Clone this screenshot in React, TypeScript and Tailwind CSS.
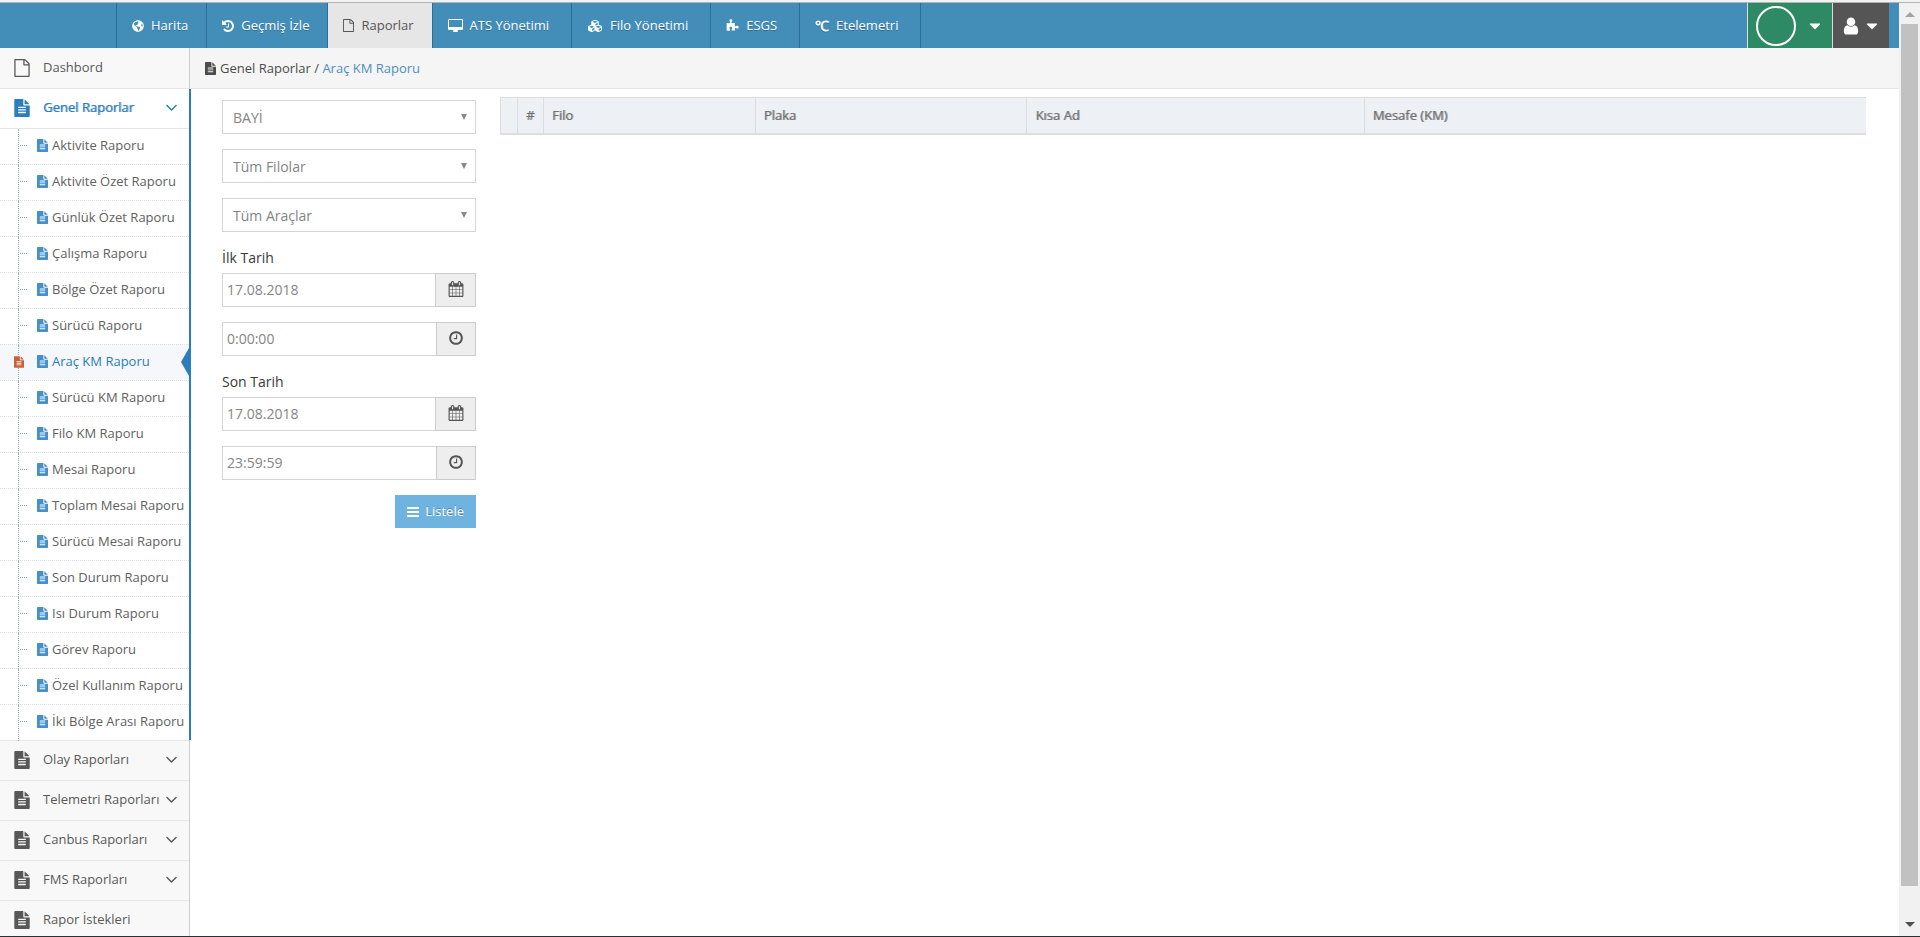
import { useState } from "react";
import type { ReactNode } from "react";
import { FaCubes, FaGlobeAmericas } from "react-icons/fa";

const PATHS = {
  file: "M1596 380q28 28 48 76t20 88v1152q0 40-28 68t-68 28h-1344q-40 0-68-28t-28-68v-1600q0-40 28-68t68-28h896q40 0 88 20t76 48zm-444-244v376h376q-10-29-22-41l-313-313q-12-12-41-22zm384 1528v-1024h-416q-40 0-68-28t-28-68v-416h-768v1536h1280z",
  fileText:
    "M1596 476q14 14 28 36h-472v-472q22 14 36 28zm-476 164h544v1056q0 40-28 68t-68 28h-1344q-40 0-68-28t-28-68v-1600q0-40 28-68t68-28h800v544q0 40 28 68t68 28zm160 736v-64q0-14-9-23t-23-9h-704q-14 0-23 9t-9 23v64q0 14 9 23t23 9h704q14 0 23-9t9-23zm0-256v-64q0-14-9-23t-23-9h-704q-14 0-23 9t-9 23v64q0 14 9 23t23 9h704q14 0 23-9t9-23zm0-256v-64q0-14-9-23t-23-9h-704q-14 0-23 9t-9 23v64q0 14 9 23t23 9h704q14 0 23-9t9-23z",
  calendar:
    "M192 1664h288v-288h-288v288zm352 0h320v-288h-320v288zm-352-352h288v-320h-288v320zm352 0h320v-320h-320v320zm-352-384h288v-288h-288v288zm736 736h320v-288h-320v288zm-384-736h320v-288h-320v288zm768 736h288v-288h-288v288zm-384-352h320v-320h-320v320zm-352-864v-288q0-13-9.5-22.5t-22.5-9.5h-64q-13 0-22.5 9.5t-9.5 22.5v288q0 13 9.5 22.5t22.5 9.5h64q13 0 22.5-9.5t9.5-22.5zm736 864h288v-320h-288v320zm-384-384h320v-288h-320v288zm384 0h288v-288h-288v288zm32-480v-288q0-13-9.5-22.5t-22.5-9.5h-64q-13 0-22.5 9.5t-9.5 22.5v288q0 13 9.5 22.5t22.5 9.5h64q13 0 22.5-9.5t9.5-22.5zm384-64v1280q0 52-38 90t-90 38h-1408q-52 0-90-38t-38-90v-1280q0-52 38-90t90-38h128v-96q0-66 47-113t113-47h64q66 0 113 47t47 113v96h384v-96q0-66 47-113t113-47h64q66 0 113 47t47 113v96h128q52 0 90 38t38 90z",
  clock:
    "M1024 544v448q0 14-9 23t-23 9h-320q-14 0-23-9t-9-23v-64q0-14 9-23t23-9h224v-352q0-14 9-23t23-9h64q14 0 23 9t9 23zm416 352q0-148-73-273t-198-198-273-73-273 73-198 198-73 273 73 273 198 198 273 73 273-73 198-198 73-273zm224 0q0 209-103 385.5t-279.5 279.5-385.5 103-385.5-103-279.5-279.5-103-385.5 103-385.5 279.5-279.5 385.5-103 385.5 103 279.5 279.5 103 385.5z",
  history:
    "M1664 896q0 156-61 298t-164 245-245 164-298 61q-172 0-327-72.5t-264-204.5q-7-10-6.5-22.5t8.5-20.5l137-138q10-9 25-9 16 2 23 12 73 95 179 147t225 52q104 0 198.5-40.5t163.5-109.5 109.5-163.5 40.5-198.5-40.5-198.5-109.5-163.5-163.5-109.5-198.5-40.5q-98 0-188 35.5t-160 101.5l137 138q31 30 14 69-17 40-59 40h-448q-26 0-45-19t-19-45v-448q0-42 40-59 39-17 69 14l130 129q107-101 244.5-156.5t284.5-55.5q156 0 298 61t245 164 164 245 61 298zm-640-288v448q0 14-9 23t-23 9h-320q-14 0-23-9t-9-23v-64q0-14 9-23t23-9h224v-352q0-14 9-23t23-9h64q14 0 23 9t9 23z",
  desktop:
    "M1728 992v-832q0-13-9.5-22.5t-22.5-9.5h-1600q-13 0-22.5 9.5t-9.5 22.5v832q0 13 9.5 22.5t22.5 9.5h1600q13 0 22.5-9.5t9.5-22.5zm128-832v1088q0 66-47 113t-113 47h-544q0 37 16 77.5t32 71 16 43.5q0 26-19 45t-45 19h-512q-26 0-45-19t-19-45q0-14 16-44t32-70 16-78h-544q-66 0-113-47t-47-113v-1088q0-66 47-113t113-47h1600q66 0 113 47t47 113z",
  puzzle:
    "M1755 1131q0 81-44.5 135t-123.5 54q-41 0-77.5-17.5t-59-38-56.5-38-71-17.5q-110 0-110 124 0 39 16 115t15 115v5q-22 0-33 1-34 3-97.5 11.5t-115.5 13.5-98 5q-61 0-103-26.5t-42-83.5q0-37 17.5-71t38-56.5 38-59 17.5-77.5q0-79-54-123.5t-135-44.5q-84 0-143 45.5t-59 127.5q0 43 15 83t33.5 64.5 33.5 53 15 50.5q0 45-46 89-37 35-117 35-95 0-245-24-9-2-27.5-4t-27.5-4l-13-2q-1 0-3-1-2 0-2-1v-1024q2 1 17.5 3.5t34 5 21.5 3.5q150 24 245 24 80 0 117-35 46-44 46-89 0-22-15-50.5t-33.5-53-33.5-64.5-15-83q0-82 59-127.5t144-45.5q80 0 134 44.5t54 123.5q0 41-17.5 77.5t-38 59-38 56.5-17.5 71q0 57 42 83.5t103 26.5q64 0 180-15t163-17v2q-1 2-3.5 17.5t-5 34-3.5 21.5q-24 150-24 245 0 80 35 117 44 46 89 46 22 0 50.5-15t53-33.5 64.5-33.5 83-15q82 0 127.5 59t45.5 143z",
  user: "M1536 1399q0 109-62.5 187t-150.5 78h-854q-88 0-150.5-78t-62.5-187q0-85 8.5-160.5t31.5-152 58.5-131 94-89 134.5-34.5q131 128 313 128t313-128q76 0 134.5 34.5t94 89 58.5 131 31.5 152 8.5 160.5zm-256-887q0 159-112.5 271.5t-271.5 112.5-271.5-112.5-112.5-271.5 112.5-271.5 271.5-112.5 271.5 112.5 112.5 271.5z",
  caret:
    "M1408 704q0 26-19 45l-448 448q-19 19-45 19t-45-19l-448-448q-19-19-19-45t19-45 45-19h896q26 0 45 19t19 45z",
  angle:
    "M1395 736q0 13-10 23l-466 466q-10 10-23 10t-23-10l-466-466q-10-10-10-23t10-23l50-50q10-10 23-10t23 10l393 393 393-393q10-10 23-10t23 10l50 50q10 10 10 23z",
  bars: "M128 256h1536v256h-1536zM128 768h1536v256h-1536zM128 1280h1536v256h-1536z",
};

const FILE_BOX = "128 0 1536 1792";

function Icon({
  name,
  className,
  box = "0 0 1792 1792",
}: {
  name: keyof typeof PATHS;
  className: string;
  box?: string;
}) {
  return (
    <svg viewBox={box} fill="currentColor" aria-hidden="true" className={`shrink-0 ${className}`}>
      <path d={PATHS[name]} />
    </svg>
  );
}

const navItems: { label: string; icon: ReactNode; wide?: boolean; active?: boolean }[] = [
  { label: "Harita", icon: <FaGlobeAmericas className="size-3" /> },
  { label: "Geçmiş İzle", icon: <Icon name="history" box="128 128 1536 1536" className="size-3" /> },
  { label: "Raporlar", icon: <Icon name="file" box={FILE_BOX} className="h-[13px] w-[11px]" />, active: true },
  {
    label: "ATS Yönetimi",
    icon: <Icon name="desktop" box="-64 0 1920 1664" className="h-[13px] w-[15px]" />,
    wide: true,
  },
  { label: "Filo Yönetimi", icon: <FaCubes className="h-[14px] w-4" />, wide: true },
  { label: "ESGS", icon: <Icon name="puzzle" className="size-[13px]" />, wide: true },
  { label: "Etelemetri", icon: <span className="text-sm font-bold leading-none">℃</span>, wide: true },
];

const reports = [
  "Aktivite Raporu",
  "Aktivite Özet Raporu",
  "Günlük Özet Raporu",
  "Çalışma Raporu",
  "Bölge Özet Raporu",
  "Sürücü Raporu",
  "Araç KM Raporu",
  "Sürücü KM Raporu",
  "Filo KM Raporu",
  "Mesai Raporu",
  "Toplam Mesai Raporu",
  "Sürücü Mesai Raporu",
  "Son Durum Raporu",
  "Isı Durum Raporu",
  "Görev Raporu",
  "Özel Kullanım Raporu",
  "İki Bölge Arası Raporu",
];

const groups = [
  { label: "Olay Raporları", nested: true },
  { label: "Telemetri Raporları", nested: true },
  { label: "Canbus Raporları", nested: true },
  { label: "FMS Raporları", nested: true },
  { label: "Rapor İstekleri", nested: false },
];

function Navbar() {
  return (
    <header className="flex h-[45px] shrink-0 bg-[#438eb9] pr-[10px]">
      <nav className="ml-[116px] flex border-r border-[#2c6f96]">
        {navItems.map((item) => (
          <a
            key={item.label}
            href="#"
            className={`flex items-center gap-[7px] border-l border-[#2c6f96] pl-[15px] ${
              item.wide ? "pr-[22px]" : "pr-[18px]"
            } ${
              item.active ? "bg-[#e6e6e6] text-[#555]" : "text-white [text-shadow:0_1px_0_rgba(0,0,0,0.25)]"
            }`}
          >
            {item.icon}
            {item.label}
          </a>
        ))}
      </nav>
      <div className="ml-auto flex text-white">
        <button
          type="button"
          aria-label="Firma"
          className="flex w-[86px] items-center gap-[10px] border-x border-[#ddd] bg-[#2e8965] pl-2"
        >
          <span className="size-10 rounded-full border-2 border-white" />
          <Icon name="caret" className="size-[18px]" />
        </button>
        <button type="button" aria-label="Kullanıcı" className="flex w-14 items-center gap-[2px] bg-[#555] pl-2">
          <Icon name="user" className="size-5" />
          <Icon name="caret" className="size-[18px]" />
        </button>
      </div>
    </header>
  );
}

function ReportLink({ label, active, last }: { label: string; active: boolean; last: boolean }) {
  return (
    <li className={`relative ${last ? "" : "border-b border-dotted border-[#ddd]"}`}>
      <a
        href="#"
        className={`flex h-[35px] items-center gap-1 whitespace-nowrap pb-[2px] pl-[37px] ${
          active ? "bg-[#f5f7fa] text-[#2b7dbc]" : "text-[#616161]"
        }`}
      >
        <Icon name="fileText" box={FILE_BOX} className="h-[13px] w-[11px] text-[#478fca]" />
        {label}
      </a>
      {active ? (
        <svg viewBox="0 0 8 28" className="absolute right-0 top-[3px] h-7 w-2" fill="#2b7dbc" aria-hidden="true">
          <path d="M8 0v28L0 14z" />
        </svg>
      ) : (
        <span className="absolute left-5 top-4 w-[7px] border-t border-dotted border-[#8fb0c9]" />
      )}
      <span className="absolute -bottom-px left-[18px] top-0 border-l border-dotted border-[#8fb0c9]" />
      {active && (
        <Icon
          name="fileText"
          box={FILE_BOX}
          className="absolute left-[14px] top-[11px] h-3 w-[10px] bg-[#f5f7fa] text-[#c86139]"
        />
      )}
    </li>
  );
}

function Sidebar() {
  return (
    <aside className="w-[190px] shrink-0 border-r border-[#ccc] bg-[#f2f2f2]">
      <ul>
        <li className="border-b border-[#e5e5e5]">
          <a href="#" className="flex h-10 items-center bg-[#f8f8f8] pl-[14px] text-[#585858]">
            <Icon name="file" box={FILE_BOX} className="mr-[13px] h-[18px] w-4" />
            Dashbord
          </a>
        </li>
        <li className="relative bg-white">
          <a
            href="#"
            className="flex h-10 items-center border-b border-[#e5e5e5] pb-px pl-[14px] pr-3 text-[#2b7dbc] [text-shadow:1px_0_0_rgba(43,125,188,0.6)]"
          >
            <Icon name="fileText" box={FILE_BOX} className="mr-[13px] h-[18px] w-4" />
            Genel Raporlar
            <Icon name="angle" box="384 512 1024 896" className="ml-auto h-[10px] w-[11px]" />
          </a>
          <ul>
            {reports.map((label, i) => (
              <ReportLink
                key={label}
                label={label}
                active={label === "Araç KM Raporu"}
                last={i === reports.length - 1}
              />
            ))}
          </ul>
          <span className="absolute -right-[2px] inset-y-0 w-[2px] bg-[#2b7dbc]" />
        </li>
        {groups.map((g) => (
          <li key={g.label} className="border-t border-[#e5e5e5]">
            <a
              href="#"
              className="flex h-[39px] items-center whitespace-nowrap bg-[#f8f8f8] pb-[2px] pl-[14px] pr-3 text-[#585858]"
            >
              <Icon name="fileText" box={FILE_BOX} className="mr-[13px] h-[18px] w-4" />
              {g.label}
              {g.nested && <Icon name="angle" box="384 512 1024 896" className="ml-auto h-[10px] w-[11px]" />}
            </a>
          </li>
        ))}
      </ul>
    </aside>
  );
}

function SelectBox({ label, value }: { label: string; value: string }) {
  return (
    <div className="relative">
      <select
        aria-label={label}
        className="h-[34px] w-full appearance-none border border-[#d5d5d5] bg-white px-[10px] pt-[2px] text-sm text-[#858585]"
      >
        <option>{value}</option>
      </select>
      <svg viewBox="0 0 6 6" className="absolute right-[9px] top-[14px] size-[6px]" fill="#888" aria-hidden="true">
        <path d="M0 0h6L3 6z" />
      </svg>
    </div>
  );
}

interface PickerInputProps {
  id: string;
  label: string;
  initial: string;
  icon: "calendar" | "clock";
}

function PickerInput({ id, label, initial, icon }: PickerInputProps) {
  const [value, setValue] = useState(initial);
  return (
    <div className="flex h-[34px]">
      <input
        id={id}
        aria-label={label}
        type="text"
        value={value}
        onChange={(e) => setValue(e.target.value)}
        className="w-full min-w-0 border border-r-0 border-[#d5d5d5] bg-white px-1 text-sm text-[#858585]"
      />
      <button
        type="button"
        aria-label={`${label} seç`}
        className={`flex shrink-0 justify-center border border-[#ccc] bg-[#eee] pt-[7px] text-[#555] ${
          icon === "calendar" ? "w-[41px]" : "w-10"
        }`}
      >
        <Icon name={icon} className="size-4" />
      </button>
    </div>
  );
}

function FilterForm() {
  return (
    <form className="flex w-[254px] shrink-0 flex-col gap-[15px] pt-[3px]" onSubmit={(e) => e.preventDefault()}>
      <SelectBox label="Bayi" value="BAYİ" />
      <SelectBox label="Filo" value="Tüm Filolar" />
      <SelectBox label="Araç" value="Tüm Araçlar" />
      <div>
        <label htmlFor="start-date" className="block h-[26px] pt-px text-sm text-[#393939]">
          İlk Tarih
        </label>
        <PickerInput id="start-date" label="İlk Tarih" initial="17.08.2018" icon="calendar" />
      </div>
      <PickerInput id="start-time" label="İlk Saat" initial="0:00:00" icon="clock" />
      <div>
        <label htmlFor="end-date" className="block h-[26px] pt-px text-sm text-[#393939]">
          Son Tarih
        </label>
        <PickerInput id="end-date" label="Son Tarih" initial="17.08.2018" icon="calendar" />
      </div>
      <PickerInput id="end-time" label="Son Saat" initial="23:59:59" icon="clock" />
      <button
        type="submit"
        className="flex h-[33px] items-center gap-[6px] self-end bg-[#6fb3e0] px-3 text-white [text-shadow:0_-1px_0_rgba(0,0,0,0.25)]"
      >
        <Icon name="bars" box="128 256 1536 1280" className="h-[10px] w-3" />
        Listele
      </button>
    </form>
  );
}

function ReportTable() {
  return (
    <table className="h-[37px] w-full table-fixed border-collapse text-left text-[13px] text-[#707070] [text-shadow:1px_0_0_rgba(112,112,112,0.6)]">
      <colgroup>
        <col className="w-[17px]" />
        <col className="w-[26px]" />
        <col className="w-[15.5%]" />
        <col className="w-[19.9%]" />
        <col className="w-[24.7%]" />
        <col />
      </colgroup>
      <thead>
        <tr className="h-9 border-b-2 border-l border-t border-[#ddd] bg-[#edf1f6]">
          <th className="border-r border-[#ddd]" />
          <th className="border-r border-[#ddd] px-2 font-normal">#</th>
          <th className="border-r border-[#ddd] px-2 font-normal">Filo</th>
          <th className="border-r border-[#ddd] px-2 font-normal">Plaka</th>
          <th className="border-r border-[#ddd] px-2 font-normal">Kısa Ad</th>
          <th className="px-2 font-normal">Mesafe (KM)</th>
        </tr>
      </thead>
    </table>
  );
}

function ScrollRail() {
  return (
    <div aria-hidden="true" className="flex w-[21px] shrink-0 flex-col items-center bg-[#f1f1f1] py-[9px]">
      <svg viewBox="0 0 10 5" className="h-[5px] w-[10px]" fill="#a3a3a3">
        <path d="M5 0l5 5H0z" />
      </svg>
      <div className="mt-[7px] w-[17px] grow bg-[#c1c1c1]" />
      <svg viewBox="0 0 10 5" className="mt-9 h-[5px] w-[10px]" fill="#505050">
        <path d="M0 0h10L5 5z" />
      </svg>
    </div>
  );
}

export default function App() {
  return (
    <div className="flex h-screen flex-col overflow-hidden border-b border-[#263238] bg-white font-['Open_Sans',sans-serif] text-[13px] text-[#393939]">
      <div className="h-[3px] shrink-0 border-b border-[#b4b4b4] bg-[#f2f2f2]" />
      <div className="flex min-h-0 grow">
        <div className="flex min-w-0 grow flex-col">
          <Navbar />
          <div className="flex min-h-0 grow">
            <Sidebar />
            <main className="min-w-0 grow">
              <div className="flex h-[41px] items-center gap-1 border-b border-[#e5e5e5] bg-[#f5f5f5] pl-[15px] pt-px">
                <Icon name="fileText" box={FILE_BOX} className="h-[13px] w-[11px] text-[#4c4c4c]" />
                <p className="text-[#4c4c4c]">
                  Genel Raporlar /{" "}
                  <a href="#" className="text-[#4c8fbd]">
                    Araç KM Raporu
                  </a>
                </p>
              </div>
              <div className="flex items-start gap-6 pl-8 pr-[33px] pt-2">
                <FilterForm />
                <ReportTable />
              </div>
            </main>
          </div>
        </div>
        <ScrollRail />
      </div>
    </div>
  );
}
